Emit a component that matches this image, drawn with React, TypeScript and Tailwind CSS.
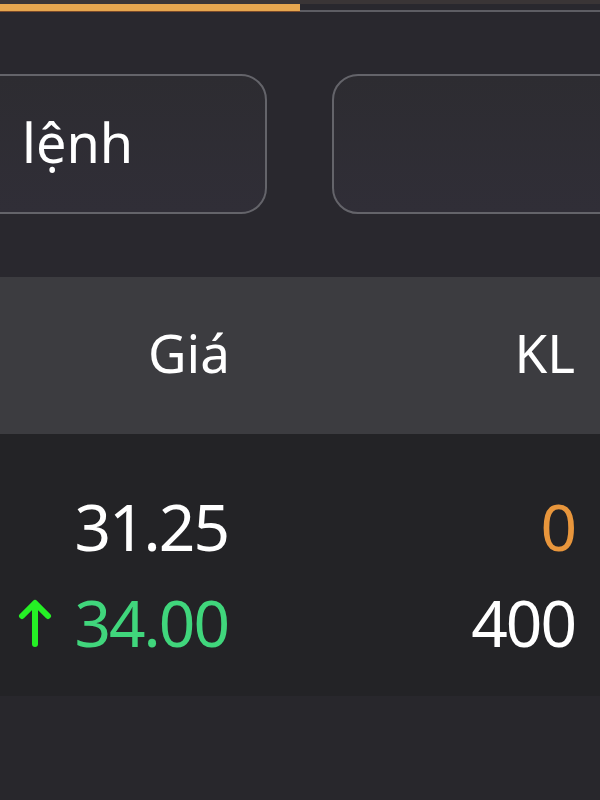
import React from 'react';

const font = { fontFamily: '"Noto Sans", "Open Sans", sans-serif' };

const ArrowUp = () => (
    <svg width="34" height="50" viewBox="0 0 34 50" fill="none" stroke="#25f025" strokeWidth="6" strokeLinecap="round" strokeLinejoin="round">
        <path d="M17 46V6" />
        <path d="M4 18L17 5l13 13" />
    </svg>
);

const App = () => {
    return (
        <div className="w-[600px] h-[800px] overflow-hidden flex flex-col bg-[#28272c] text-white" style={font}>
            {/* tab underline */}
            <div className="h-[4px] bg-[#3a3536]" />
            <div className="flex items-end h-[8px] bg-[#29282e]">
                <div className="w-[300px] h-full bg-[#e6a64f] border-b border-[#7a4a2a]" />
                <div className="flex-1 h-[2px] bg-[#5e5e64]" />
            </div>

            {/* buttons */}
            <div className="bg-[#29282e] pt-[62px] pb-[63px]">
                <div className="flex gap-[65px] -ml-[80px]">
                    <div className="w-[347px] h-[140px] shrink-0 rounded-[26px] border-2 border-[#64646a] bg-gradient-to-b from-[#2d2c31] to-[#302e37] flex items-center pl-[100px]">
                        <span className="text-[54px] leading-none pb-[4px] whitespace-nowrap">lệnh</span>
                    </div>
                    <div className="w-[347px] h-[140px] shrink-0 rounded-[26px] border-2 border-[#64646a] bg-gradient-to-b from-[#2d2c31] to-[#302e37]" />
                </div>
            </div>

            {/* table header */}
            <div className="h-[157px] bg-[#3c3c40] flex items-center text-[53px] leading-none">
                <div className="w-[230px] text-right pb-[6px]">Giá</div>
                <div className="flex-1 text-right pr-[25px] pb-[6px]">KL</div>
            </div>

            {/* table body */}
            <div className="h-[262px] bg-[#232326] pt-[45px] text-[64px] leading-none tracking-[-2px]">
                <div className="h-[96px] flex items-center">
                    <div className="w-[228px] text-right">31.25</div>
                    <div className="flex-1 text-right pr-[25px] text-[#e8963c]">0</div>
                </div>
                <div className="h-[96px] flex items-center">
                    <div className="w-[228px] flex items-center justify-end gap-[22px]">
                        <ArrowUp />
                        <span className="text-[#40d67c]">34.00</span>
                    </div>
                    <div className="flex-1 text-right pr-[25px]">400</div>
                </div>
            </div>

            <div className="flex-1 bg-[#28272c]" />
        </div>
    );
};

export default App;
